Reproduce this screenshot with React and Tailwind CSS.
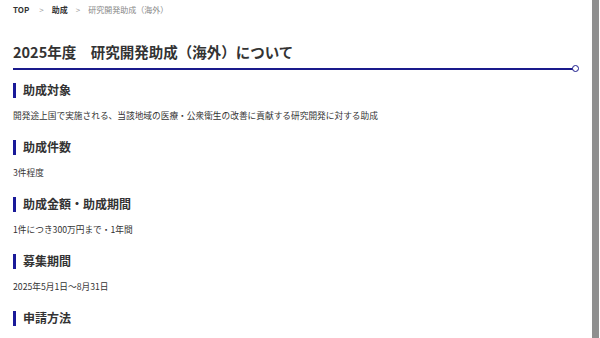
import React from 'react';

const sections = [
  { title: '助成対象', body: '開発途上国で実施される、当該地域の医療・公衆衛生の改善に貢献する研究開発に対する助成' },
  { title: '助成件数', body: '3件程度' },
  { title: '助成金額・助成期間', body: '1件につき300万円まで・1年間' },
  { title: '募集期間', body: '2025年5月1日～8月31日' },
  { title: '申請方法', body: '' },
];

export default function App() {
  return (
    <div
      className="flex h-[338px] w-[600px] overflow-hidden bg-white text-[#333]"
      style={{ fontFamily: '"Noto Sans CJK JP", "Noto Sans", sans-serif' }}
    >
      <main className="flex-1 pl-[13px] pr-[18px]">
        {/* breadcrumb */}
        <nav className="flex h-[19px] items-center text-[8px] leading-none">
          <span className="font-bold">TOP</span>
          <span className="ml-[10px] mr-[8px] text-[#999]">&gt;</span>
          <span className="font-bold">助成</span>
          <span className="ml-[8px] mr-[8px] text-[#999]">&gt;</span>
          <span className="text-[#888]">研究開発助成（海外）</span>
        </nav>

        <h1 className="mt-[26px] text-[14.5px] font-bold leading-none">2025年度　研究開発助成（海外）について</h1>
        <div className="relative mt-[8px] h-[2px] bg-[#1a1a8c]">
          <span className="absolute -right-[5px] -top-[2.5px] h-[7px] w-[7px] rounded-full border-[1.5px] border-[#1a1a8c] bg-white" />
        </div>

        <div className="mt-[13px] flex flex-col">
          {sections.map((s) => (
            <section key={s.title} className="h-[57px]">
              <h2 className="flex items-center gap-[7px] text-[12px] font-bold leading-none">
                <span className="h-[15px] w-[3px] bg-[#1a1a99]" />
                {s.title}
              </h2>
              {s.body && <p className="mt-[14px] text-[8.7px] leading-none">{s.body}</p>}
            </section>
          ))}
        </div>
      </main>
      <div className="mr-[1px] w-[7px] bg-[#8f8f8f]" />
    </div>
  );
}
